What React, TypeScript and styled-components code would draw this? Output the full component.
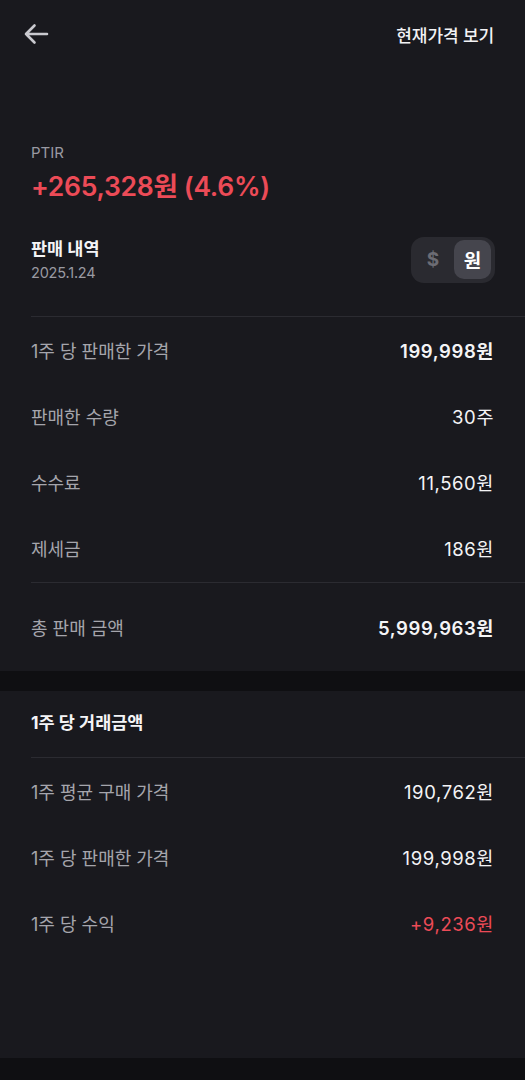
import styled, { createGlobalStyle } from "styled-components"

const GlobalStyle = createGlobalStyle`
  html, body {
    margin: 0;
    padding: 0;
    background: #0f0f12;
  }
  body {
    font-family: Inter, "Noto Sans CJK KR", "Noto Sans", sans-serif;
    color: #ffffff;
    -webkit-font-smoothing: antialiased;
  }
`

type Row = { label: string; value: string; strong?: boolean; tone?: "plus" }

const saleRows: Row[] = [
  { label: "1주 당 판매한 가격", value: "199,998원", strong: true },
  { label: "판매한 수량", value: "30주" },
  { label: "수수료", value: "11,560원" },
  { label: "제세금", value: "186원" }
]

const perShareRows: Row[] = [
  { label: "1주 평균 구매 가격", value: "190,762원" },
  { label: "1주 당 판매한 가격", value: "199,998원" },
  { label: "1주 당 수익", value: "+9,236원", tone: "plus" }
]

export default function App() {
  return (
    <Page>
      <GlobalStyle />
      <Card>
        <TopBar>
          <BackButton aria-label="뒤로">
            <svg width="26" height="22" viewBox="0 0 26 22" fill="none">
              <path
                d="M24 11H3M11.5 2.5L3 11l8.5 8.5"
                stroke="#c9c9cf"
                strokeWidth="2.6"
                strokeLinecap="round"
                strokeLinejoin="round"
              />
            </svg>
          </BackButton>
          <TopLink>현재가격 보기</TopLink>
        </TopBar>

        <Summary>
          <Ticker>PTIR</Ticker>
          <Profit>+265,328원 (4.6%)</Profit>
        </Summary>

        <HistoryHead>
          <div>
            <HeadTitle>판매 내역</HeadTitle>
            <HeadDate>2025.1.24</HeadDate>
          </div>
          <Toggle>
            <ToggleItem>$</ToggleItem>
            <ToggleItem $active>원</ToggleItem>
          </Toggle>
        </HistoryHead>

        <Divider />
        <List>
          {saleRows.map(r => (
            <InfoRow key={r.label}>
              <Label>{r.label}</Label>
              <Value $strong={r.strong}>{r.value}</Value>
            </InfoRow>
          ))}
        </List>
        <Divider />
        <TotalRow>
          <Label>총 판매 금액</Label>
          <Value $strong>5,999,963원</Value>
        </TotalRow>
      </Card>

      <Card $second>
        <SectionTitle>1주 당 거래금액</SectionTitle>
        <Divider />
        <List>
          {perShareRows.map(r => (
            <InfoRow key={r.label}>
              <Label>{r.label}</Label>
              <Value $tone={r.tone}>{r.value}</Value>
            </InfoRow>
          ))}
        </List>
      </Card>
    </Page>
  )
}

const Page = styled.div`
    width: 525px;
    min-height: 1080px;
    background: #0f0f12;
    display: flex;
    flex-direction: column;
    gap: 20px;
  `,
  Card = styled.section<{ $second?: boolean }>`
    background: #19191e;
    display: flex;
    flex-direction: column;
    padding: ${p => (p.$second ? "0 0 101px 31px" : "0 0 0 31px")};
  `,
  TopBar = styled.header`
    height: 68px;
    display: flex;
    align-items: center;
    justify-content: space-between;
    padding-right: 31px;
    margin-left: -8px;
  `,
  BackButton = styled.button`
    background: none;
    border: 0;
    padding: 0;
    display: flex;
    align-items: center;
    cursor: pointer;
  `,
  TopLink = styled.span`
    font-size: 17px;
    font-weight: 500;
    color: #f2f2f5;
    letter-spacing: -0.1px;
  `,
  Summary = styled.div`
    display: flex;
    flex-direction: column;
    margin-top: 74px;
  `,
  Ticker = styled.div`
    font-size: 15px;
    line-height: 22px;
    color: #9a9aa2;
  `,
  Profit = styled.div`
    font-size: 26.5px;
    line-height: 36px;
    font-weight: 600;
    color: #ec4b57;
    margin-top: 4px;
    letter-spacing: -0.3px;
  `,
  HistoryHead = styled.div`
    display: flex;
    justify-content: space-between;
    align-items: center;
    padding-right: 30px;
    margin-top: 23px;
    height: 66px;
    margin-bottom: 23px;
  `,
  HeadTitle = styled.div`
    font-size: 17.5px;
    line-height: 24px;
    font-weight: 700;
    color: #f4f4f6;
  `,
  HeadDate = styled.div`
    font-size: 14.5px;
    line-height: 20px;
    color: #9a9aa2;
    margin-top: 2px;
    letter-spacing: -0.2px;
  `,
  Toggle = styled.div`
    display: flex;
    align-items: center;
    gap: 3px;
    background: #2a2a30;
    border-radius: 13px;
    padding: 3px 4px 4px 4px;
  `,
  ToggleItem = styled.div<{ $active?: boolean }>`
    width: ${p => (p.$active ? "37px" : "36px")};
    height: 39px;
    border-radius: 10px;
    display: flex;
    align-items: center;
    justify-content: center;
    font-size: 19px;
    font-weight: 700;
    background: ${p => (p.$active ? "#45454d" : "transparent")};
    color: ${p => (p.$active ? "#ffffff" : "#6c6c74")};
  `,
  Divider = styled.hr`
    border: 0;
    height: 1px;
    background: #2b2b31;
    margin: 0;
  `,
  List = styled.div`
    display: flex;
    flex-direction: column;
    padding: 0 0 1px;
  `,
  InfoRow = styled.div`
    height: 66px;
    display: flex;
    align-items: center;
    justify-content: space-between;
    padding-right: 31px;
  `,
  TotalRow = styled(InfoRow)`
    height: 88px;
  `,
  Label = styled.span`
    font-size: 18px;
    color: #a5a5ac;
  `,
  Value = styled.span<{ $strong?: boolean; $tone?: "plus" }>`
    font-size: 18.5px;
    font-weight: ${p => (p.$strong ? 600 : 400)};
    color: ${p => (p.$tone === "plus" ? "#ec4b57" : "#f4f4f6")};
    letter-spacing: 0.6px;
  `,
  SectionTitle = styled.div`
    height: 66px;
    display: flex;
    align-items: center;
    padding-bottom: 5px;
    box-sizing: border-box;
    font-size: 17.5px;
    font-weight: 700;
    color: #f4f4f6;
  `
